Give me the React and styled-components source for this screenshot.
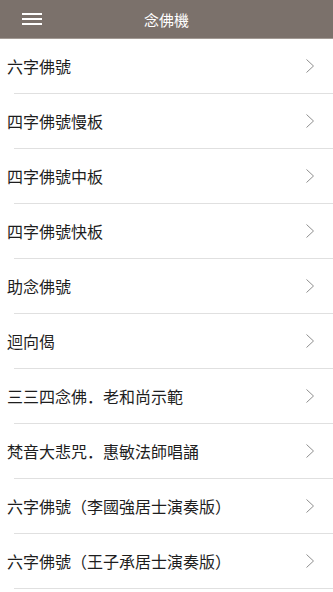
import React from "react";
import styled, { createGlobalStyle } from "styled-components";

const GlobalStyle = createGlobalStyle`
  html, body {
    margin: 0;
    padding: 0;
    background: #ffffff;
    font-family: "Noto Sans CJK SC", "Noto Sans CJK TC", sans-serif;
  }
`;

const items = [
  "六字佛號",
  "四字佛號慢板",
  "四字佛號中板",
  "四字佛號快板",
  "助念佛號",
  "迴向偈",
  "三三四念佛．老和尚示範",
  "梵音大悲咒．惠敏法師唱誦",
  "六字佛號（李國強居士演奏版）",
  "六字佛號（王子承居士演奏版）",
];

const App = () => {
  return (
    <>
      <GlobalStyle />
      <Page>
        <Header>
          <MenuButton>
            <Bar />
            <Bar />
            <Bar />
          </MenuButton>
          <Title>念佛機</Title>
        </Header>
        <List>
          {items.map((label) => (
            <Row key={label}>
              <Label>{label}</Label>
              <Chevron viewBox="0 0 10 16">
                <polyline
                  points="1.5,1.5 8.5,8 1.5,14.5"
                  fill="none"
                  stroke="#8f8f8f"
                  strokeWidth="1"
                />
              </Chevron>
            </Row>
          ))}
        </List>
      </Page>
    </>
  );
};

const Page = styled.div`
  width: 333px;
  height: 592px;
  overflow: hidden;
  background: #ffffff;
`;
const Header = styled.div`
  position: relative;
  height: 38px;
  background-color: #7b716b;
  border-bottom: 1px solid #a29a94;
  display: flex;
  align-items: center;
  justify-content: center;
`;
const MenuButton = styled.div`
  position: absolute;
  left: 22px;
  top: 13px;
  width: 20px;
  display: flex;
  flex-direction: column;
  gap: 3px;
`;
const Bar = styled.div`
  height: 2px;
  background: #ffffff;
`;
const Title = styled.div`
  color: #ffffff;
  font-size: 15px;
`;
const List = styled.div`
  display: flex;
  flex-direction: column;
`;
const Row = styled.div`
  height: 54px;
  margin-left: 14px;
  padding-right: 18px;
  border-bottom: 1px solid #e0e0e0;
  display: flex;
  align-items: center;
  justify-content: space-between;
`;
const Label = styled.div`
  margin-left: -7px;
  font-size: 16px;
  color: #1e1e1e;
`;
const Chevron = styled.svg`
  width: 10px;
  height: 16px;
`;

export default App;
